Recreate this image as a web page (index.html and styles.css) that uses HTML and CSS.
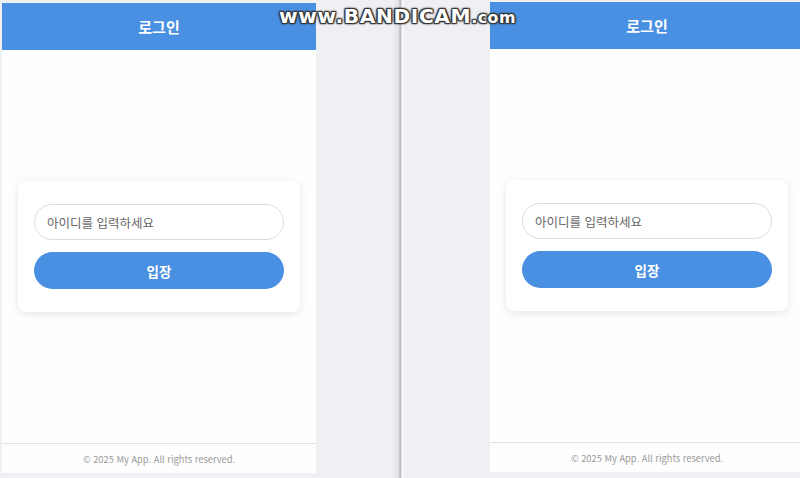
FILE: index.html
```html
<!DOCTYPE html>
<html lang="ko">
<head>
<meta charset="utf-8">
<title>로그인</title>
<link rel="stylesheet" href="styles.css">
</head>
<body>
<div class="stage">
  <section class="phone phone-left">
    <header class="phone-header">로그인</header>
    <main class="phone-main">
      <div class="card">
        <div class="input">아이디를 입력하세요</div>
        <button class="btn">입장</button>
      </div>
    </main>
    <footer class="phone-footer">© 2025 My App. All rights reserved.</footer>
  </section>
  <div class="gap">
    <div class="divider"></div>
  </div>
  <section class="phone phone-right">
    <header class="phone-header">로그인</header>
    <main class="phone-main">
      <div class="card">
        <div class="input">아이디를 입력하세요</div>
        <button class="btn">입장</button>
      </div>
    </main>
    <footer class="phone-footer">© 2025 My App. All rights reserved.</footer>
  </section>
</div>
<div class="watermark">www.BANDICAM<span class="wm-small">.com</span></div>
</body>
</html>
```

FILE: styles.css
```css
* { box-sizing: border-box; }
html, body { margin: 0; padding: 0; }
body {
  width: 800px;
  height: 478px;
  overflow: hidden;
  background: #eef0f3;
  font-family: "Noto Sans CJK KR", "Noto Sans", sans-serif;
  position: relative;
}
.stage {
  display: flex;
  align-items: flex-start;
  height: 478px;
  padding-left: 2px;
}
.phone {
  flex: 0 0 314px;
  width: 314px;
  height: 470px;
  background: #fefefe;
  display: flex;
  flex-direction: column;
}
.phone-left { margin-top: 3px; }
.phone-right { margin-top: 2px; }
.phone-header {
  height: 47px;
  flex: 0 0 47px;
  background: #4a90e2;
  color: #fff;
  font-weight: 700;
  font-size: 15px;
  display: flex;
  align-items: center;
  justify-content: center;
}
.phone-main {
  flex: 1;
  display: flex;
  flex-direction: column;
  justify-content: center;
  padding: 0 16px;
}
.card {
  background: #fff;
  border-radius: 8px;
  box-shadow: 0 2px 8px rgba(0,0,0,0.10);
  padding: 23px 16px;
  display: flex;
  flex-direction: column;
  gap: 12px;
}
.input {
  height: 36px;
  border: 1px solid #dcdcdc;
  border-radius: 18px;
  padding: 0 12px;
  display: flex;
  align-items: center;
  font-size: 12.5px;
  color: #666;
}
.btn {
  height: 37px;
  border: none;
  border-radius: 19px;
  background: #4a90e2;
  color: #fff;
  font-family: inherit;
  font-weight: 700;
  font-size: 13.5px;
  padding: 0;
}
.phone-footer {
  height: 30px;
  flex: 0 0 30px;
  border-top: 1px solid #e2e2e4;
  display: flex;
  align-items: center;
  justify-content: center;
  font-size: 9.3px;
  color: #999;
}
.gap {
  flex: 0 0 174px;
  height: 478px;
  display: flex;
}
.divider {
  margin-left: 76px;
  width: 12px;
  height: 478px;
  background: linear-gradient(to right, rgba(220,222,226,0) 0, #e0e1e5 7px, #b0b1b5 8px, #c8c9cd 9px, #fbfbfc 10px, #f4f5f7 12px);
}
.watermark {
  position: absolute;
  left: 279px;
  top: 5px;
  font-family: "DejaVu Sans", sans-serif;
  font-weight: 700;
  font-size: 19px;
  letter-spacing: 0.6px;
  color: #fff;
  transform: scaleX(1.06);
  transform-origin: left center;
  text-shadow: 0 0 1px #222, 0 0 2px #333, 0 0 3px #444, 1px 1px 1px #333, -1px -1px 1px #333, 1px -1px 1px #333, -1px 1px 1px #333;
}
.wm-small { font-size: 15px; letter-spacing: 0.4px; }
```
